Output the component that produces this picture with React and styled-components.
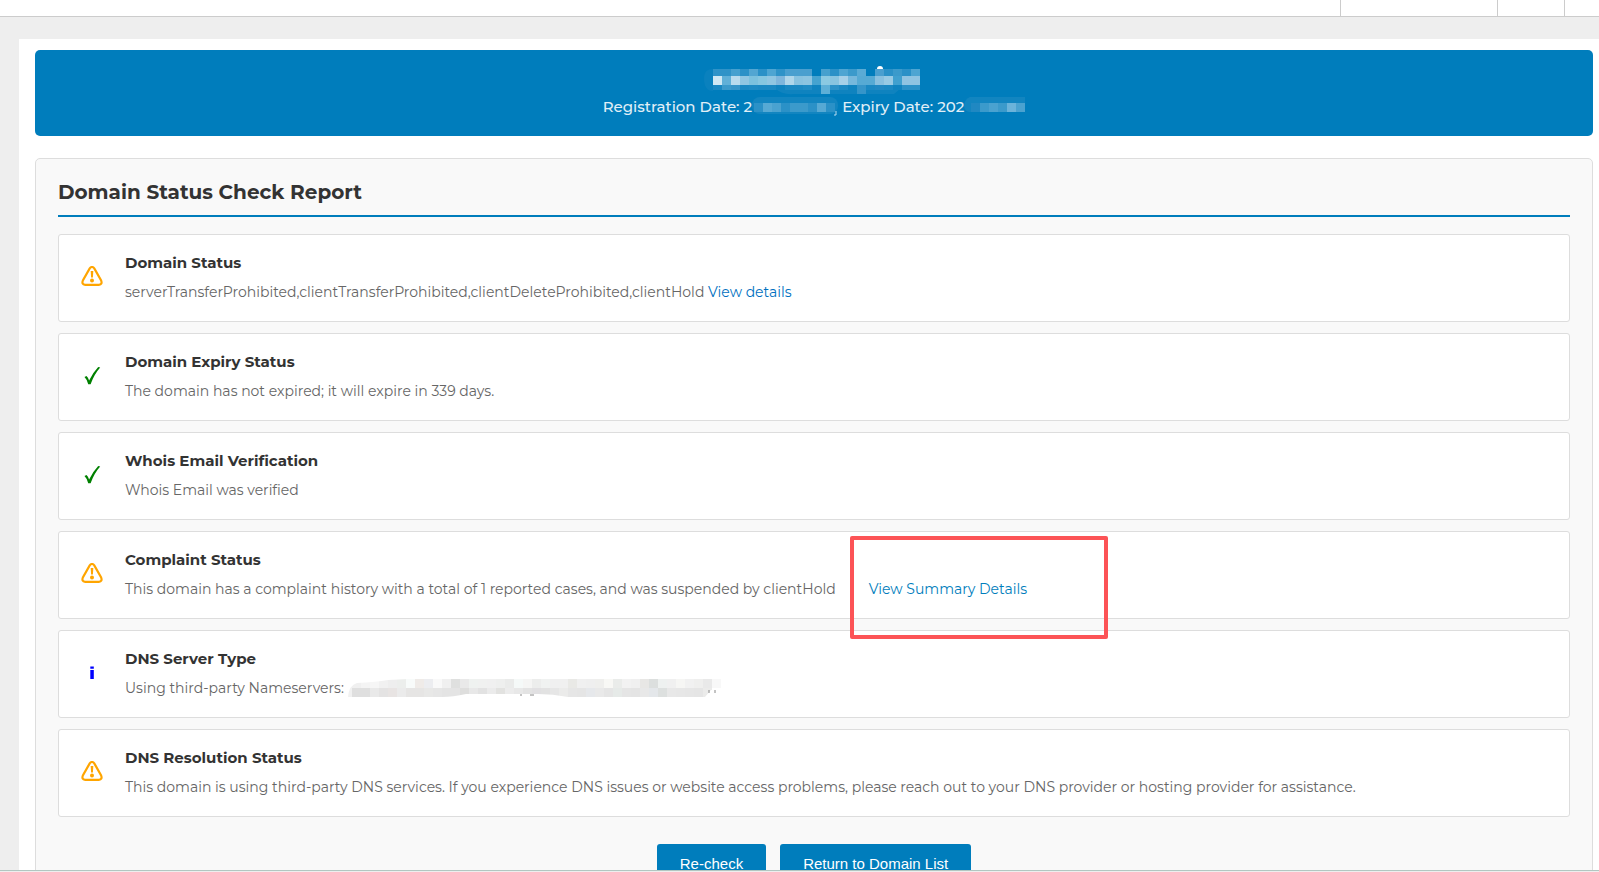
import React from 'react';
import styled, { createGlobalStyle } from 'styled-components';

const GlobalStyle = createGlobalStyle`
  * {
    box-sizing: border-box;
  }
  html, body {
    margin: 0;
    overflow: hidden;
  }
  body {
    background: #eee;
    color: #333;
    font-family: Montserrat, Inter, sans-serif;
  }
`;

// Page frame
const Page = styled.div`
  display: flex;
  flex-direction: column;
  height: 100vh;
  overflow: hidden;
  border-bottom: 1px solid #eee;
`;

const TopBar = styled.header`
  display: flex;
  justify-content: flex-end;
  flex: none;
  height: 17px;
  background: #fff;
  border-bottom: 1px solid #ccc;
`;

const TopCell = styled.div`
  width: ${(props) => props.$width}px;
  border-left: 1px solid #ccc;
`;

const Content = styled.main`
  flex: 1;
  min-height: 0;
  overflow: hidden;
  margin: 22px 0 0 19px;
  padding: 11px 6px 0 16px;
  background: #fff;
`;

const BottomLine = styled.div`
  flex: none;
  height: 1px;
  background: #b3c6c1;
`;

// Blue header
const Banner = styled.section`
  display: flex;
  flex-direction: column;
  align-items: center;
  padding: 15px 22px 17px;
  border-radius: 5px;
  background: #007dbc;
  color: #e0eff7;
`;

const BannerDates = styled.p`
  display: flex;
  align-items: center;
  margin: 0;
  font-size: 15px;
  font-weight: 500;
  line-height: 24px;
  white-space: pre;
`;

const Mosaic = styled.svg`
  flex: none;
  display: block;
`;

// Report
const Report = styled.section`
  margin-top: 22px;
  padding: 22px;
  border: 1px solid #ddd;
  border-radius: 5px;
  background: #f9f9f9;
`;

const ReportTitle = styled.h2`
  margin: 0 0 17px;
  padding-bottom: 12px;
  border-bottom: 2px solid #007dbc;
  font-size: 20px;
  font-weight: 700;
  line-height: 22px;
`;

const List = styled.ul`
  display: flex;
  flex-direction: column;
  gap: 11px;
  margin: 0;
  padding: 0;
  list-style: none;
`;

const Row = styled.li`
  display: flex;
  align-items: center;
  padding: 16px 22px 17px;
  border: 1px solid #ddd;
  border-radius: 3px;
  background: #fff;
`;

const IconBox = styled.div`
  display: flex;
  justify-content: center;
  width: 22px;
  margin-right: 22px;
  padding-bottom: 3px;
`;

const RowTitle = styled.h3`
  margin: 0 0 5px;
  font-size: 15px;
  font-weight: 700;
  line-height: 24px;
`;

const RowText = styled.p`
  display: flex;
  align-items: center;
  margin: 0;
  color: #666;
  font-size: 14px;
  line-height: 24px;
  white-space: pre;
`;

const Link = styled.a`
  color: ${(props) => props.$color || '#0070c0'};
  text-decoration: none;
`;

const Highlighted = styled.span`
  position: relative;
  margin-left: 33px;
`;

const HighlightBox = styled.span`
  position: absolute;
  top: -41px;
  left: -19px;
  width: 258px;
  height: 103px;
  border: 4px solid #fc5356;
  border-radius: 2px;
`;

const Actions = styled.div`
  display: flex;
  justify-content: center;
  gap: 14px;
  margin-top: 27px;
`;

const Button = styled.button`
  flex: none;
  height: 38px;
  padding: 0 23px;
  border: 0;
  border-radius: 3px;
  background: #007dbc;
  color: #fff;
  font: 15px 'Liberation Sans', Arial, sans-serif;
`;

const WarningIcon = () => (
  <svg width="22" height="20" viewBox="0 0 22 20" role="img" aria-label="Warning">
    <path
      d="M8.7 2.4Q11 -.4 13.3 2.4L20 14.2Q21.8 18.5 17.8 18.8H4.2Q.2 18.5 2 14.2Z"
      fill="none"
      stroke="orange"
      strokeWidth="2.2"
    />
    <path d="M9.7 5h2.6l-.4 6.6h-1.8z" fill="orange" />
    <circle cx="11" cy="14.6" r="2" fill="orange" />
  </svg>
);

const CheckIcon = () => (
  <svg width="22" height="20" viewBox="0 -1 22 20" role="img" aria-label="Passed">
    <path d="M3.5 11L5.5 10Q7.1 11.5 8.1 14.4Q12 6.5 17.2 1L19.2 1.6Q13.3 8.2 9.6 18.2H7.2Q6 13.4 3.5 11Z" fill="green" />
  </svg>
);

const InfoIcon = () => (
  <svg width="22" height="20" viewBox="0 0 22 20" role="img" aria-label="Info">
    <path d="M9.3 4.5h3.5v2.2H9.3zM9.3 8h3.5v9H9.3z" fill="blue" />
  </svg>
);

const icons = { warning: WarningIcon, check: CheckIcon, info: InfoIcon };

// Masked values: each string is a row of 9px tiles, "-" leaves a tile out
const CELL = 9;

const nameTop = '2f93c8 2f93c8 45a0cf 2b91c7 52a6d2 2b91c7 4ea5d2 2f93c8 4a9fcf 4a9fcf 4a9fcf - 46a0ce 2b91c7 4ea5d2 3b9acb 5aabd5 - 4a9fcf 2b91c7 3b9acb 2b91c7 4ea5d2';
const nameMiddle = 'cfe8f4 60b0d8 b8dbee 90c6e2 7bc1de 86c6e0 90c6e2 7fb6dc b0d6ea 88c2e0 8cc4e1 45a3d0 8bc9e2 88c4e0 a6d0e8 76b8dc 56aad4 56aad4 88c0df 98cae4 40a0cf 90c4e2 90c4e2';
const nameBottom = '1a88c2 3b9acb 3595c9 1a88c2 1d8ac3 1a88c2 1a88c2 0f83bf 1a88c2 1a88c2 1f8bc4 0f83bf 5dafd7 2b91c7 1c89c3 0f83bf 3595c9 1a88c2 2088c2 1a88c2 0f83bf 2b91c7 2b91c7';
const registeredTiles = '2b91c7 56a9d4 4aa2d0 2b91c7 3b9acb 3b9acb 2b91c7 56a9d4 2b91c7';
const expiryTiles = '2088c2 3b9acb 4aa2d0 3b9acb 6bb3da 4aa2d0';
const serversTop = 'f0f0f0 f4f4f4 f6f6f6 f1f1f1 eeeeee eceeec f8fbfa efebe8 ecedf0 f9f9f9 f0f0f0 dfe0df e9e9e9 eff2f0 f0f1f0 f0f0f0 eeefee eaebea f5f9f8 f5f5f4 ecedec f0f2f1 f0f0f0 f0f0f0 e9e9e6 f0f0f0 efefef efefed f8f8f5 eaecea f2f2f2 f0f0f0 e8e7e5 dcdfde eef1f0 f0f0f0 f6f6f4 f1f1f1 efefee e9e9e9 f8f8f8';
const serversBottom = 'dfdfdf dfdfdf e9e9e9 e4e3e3 e8e4e3 ebebeb e6e5e4 e6e5e4 e8e8e7 e6e6e6 e4e4e4 e4e4e4 dededd e8e8e8 e2e2e2 ebebeb e2e2e0 ececec e8e8e8 e3e3e3 e1e0e2 e2e2e2 e6e6e6 ebebea e6e6e6 e5e5e5 e6e8eb e9e9e9 e5e5e5 e6eae8 e5e5e5 e4e4e4 e8e8e8 e4e7ea dde0df e8e8e8 e7e7e7 e6e6e6 e5e5e5 ebebea';

const Tiles = ({ colors, x, y, height }) =>
  colors.split(' ').map((color, i) =>
    color === '-' ? null : (
      <rect key={i} x={x + i * CELL} y={y} width={CELL} height={height} fill={`#${color}`} />
    )
  );

const MaskedName = () => (
  <Mosaic width="220" height="30" aria-hidden="true">
    <path d="M9 4Q0 4 0 13Q0 26 9 26Z" fill="#0a81be" />
    <path d="M72 24H196L190 29H90Q78 30 72 24Z" fill="#0f83bf" />
    <Tiles colors={nameTop} x={9} y={4} height={7} />
    <Tiles colors={nameMiddle} x={9} y={11} height={9} />
    <Tiles colors={nameBottom} x={9} y={20} height={5} />
    <rect x="117" y="20" width="9" height="9" fill="#5dafd7" />
    <rect x="153" y="20" width="9" height="9" fill="#3595c9" />
    <path d="M173 4Q173 1 176 1Q179 1 179 4Z" fill="#fff" />
  </Mosaic>
);

const MaskedRegistered = () => (
  <Mosaic width="90" height="20" aria-hidden="true">
    <rect x="0" y="0" width="86" height="17" rx="8" fill="#1285c0" />
    <Tiles colors={registeredTiles} x={2} y={6} height={9} />
    <path d="M84 14v4h-2" fill="none" stroke="#b8dbee" />
  </Mosaic>
);

const MaskedExpiry = () => (
  <Mosaic width="61" height="20" aria-hidden="true">
    <path d="M6 0H61V15H6Q0 15 0 8Q1 2 6 0Z" fill="#1285c0" />
    <Tiles colors={expiryTiles} x={7} y={6} height={9} />
  </Mosaic>
);

const MaskedServers = () => (
  <Mosaic width="375" height="18" aria-hidden="true">
    <clipPath id="servers-outline">
      <path d="M0 18Q1 6 9 4Q28 3 40 1L60 0H375V11H363L357 18H220Q205 15 190 15H118Q105 18 94 18Z" />
    </clipPath>
    <g clipPath="url(#servers-outline)">
      <rect width="4" height="18" fill="#f1f1f1" />
      <Tiles colors={serversTop} x={4} y={0} height={9} />
      <Tiles colors={serversBottom} x={4} y={9} height={9} />
    </g>
    <path d="M173 15v2M182 16h4M361 11v3M367 11v3" stroke="#888" />
  </Mosaic>
);

const StatusRow = ({ icon, title, children }) => {
  const Icon = icons[icon];
  return (
    <Row>
      <IconBox>
        <Icon />
      </IconBox>
      <div>
        <RowTitle>{title}</RowTitle>
        <RowText>{children}</RowText>
      </div>
    </Row>
  );
};

const App = () => {
  return (
    <Page>
      <GlobalStyle />
      <TopBar>
        <TopCell $width={157} />
        <TopCell $width={67} />
        <TopCell $width={35} />
      </TopBar>
      <Content>
        <Banner>
          <MaskedName />
          <BannerDates>
            Registration Date: 2<MaskedRegistered />
            Expiry Date: 202<MaskedExpiry />
          </BannerDates>
        </Banner>
        <Report>
          <ReportTitle>Domain Status Check Report</ReportTitle>
          <List>
            <StatusRow icon="warning" title="Domain Status">
              serverTransferProhibited,clientTransferProhibited,clientDeleteProhibited,clientHold{' '}
              <Link href="#status">View details</Link>
            </StatusRow>
            <StatusRow icon="check" title="Domain Expiry Status">
              The domain has not expired; it will expire in 339 days.
            </StatusRow>
            <StatusRow icon="check" title="Whois Email Verification">
              Whois Email was verified
            </StatusRow>
            <StatusRow icon="warning" title="Complaint Status">
              This domain has a complaint history with a total of 1 reported cases, and was suspended by clientHold
              <Highlighted>
                <Link href="#summary" $color="#007dbc">View Summary Details</Link>
                <HighlightBox />
              </Highlighted>
            </StatusRow>
            <StatusRow icon="info" title="DNS Server Type">
              Using third-party Nameservers:{' '}
              <MaskedServers />
            </StatusRow>
            <StatusRow icon="warning" title="DNS Resolution Status">
              This domain is using third-party DNS services. If you experience DNS issues or website access problems, please reach out to your DNS provider or hosting provider for assistance.
            </StatusRow>
          </List>
          <Actions>
            <Button type="button">Re-check</Button>
            <Button type="button">Return to Domain List</Button>
          </Actions>
        </Report>
      </Content>
      <BottomLine />
    </Page>
  );
};

export default App;
